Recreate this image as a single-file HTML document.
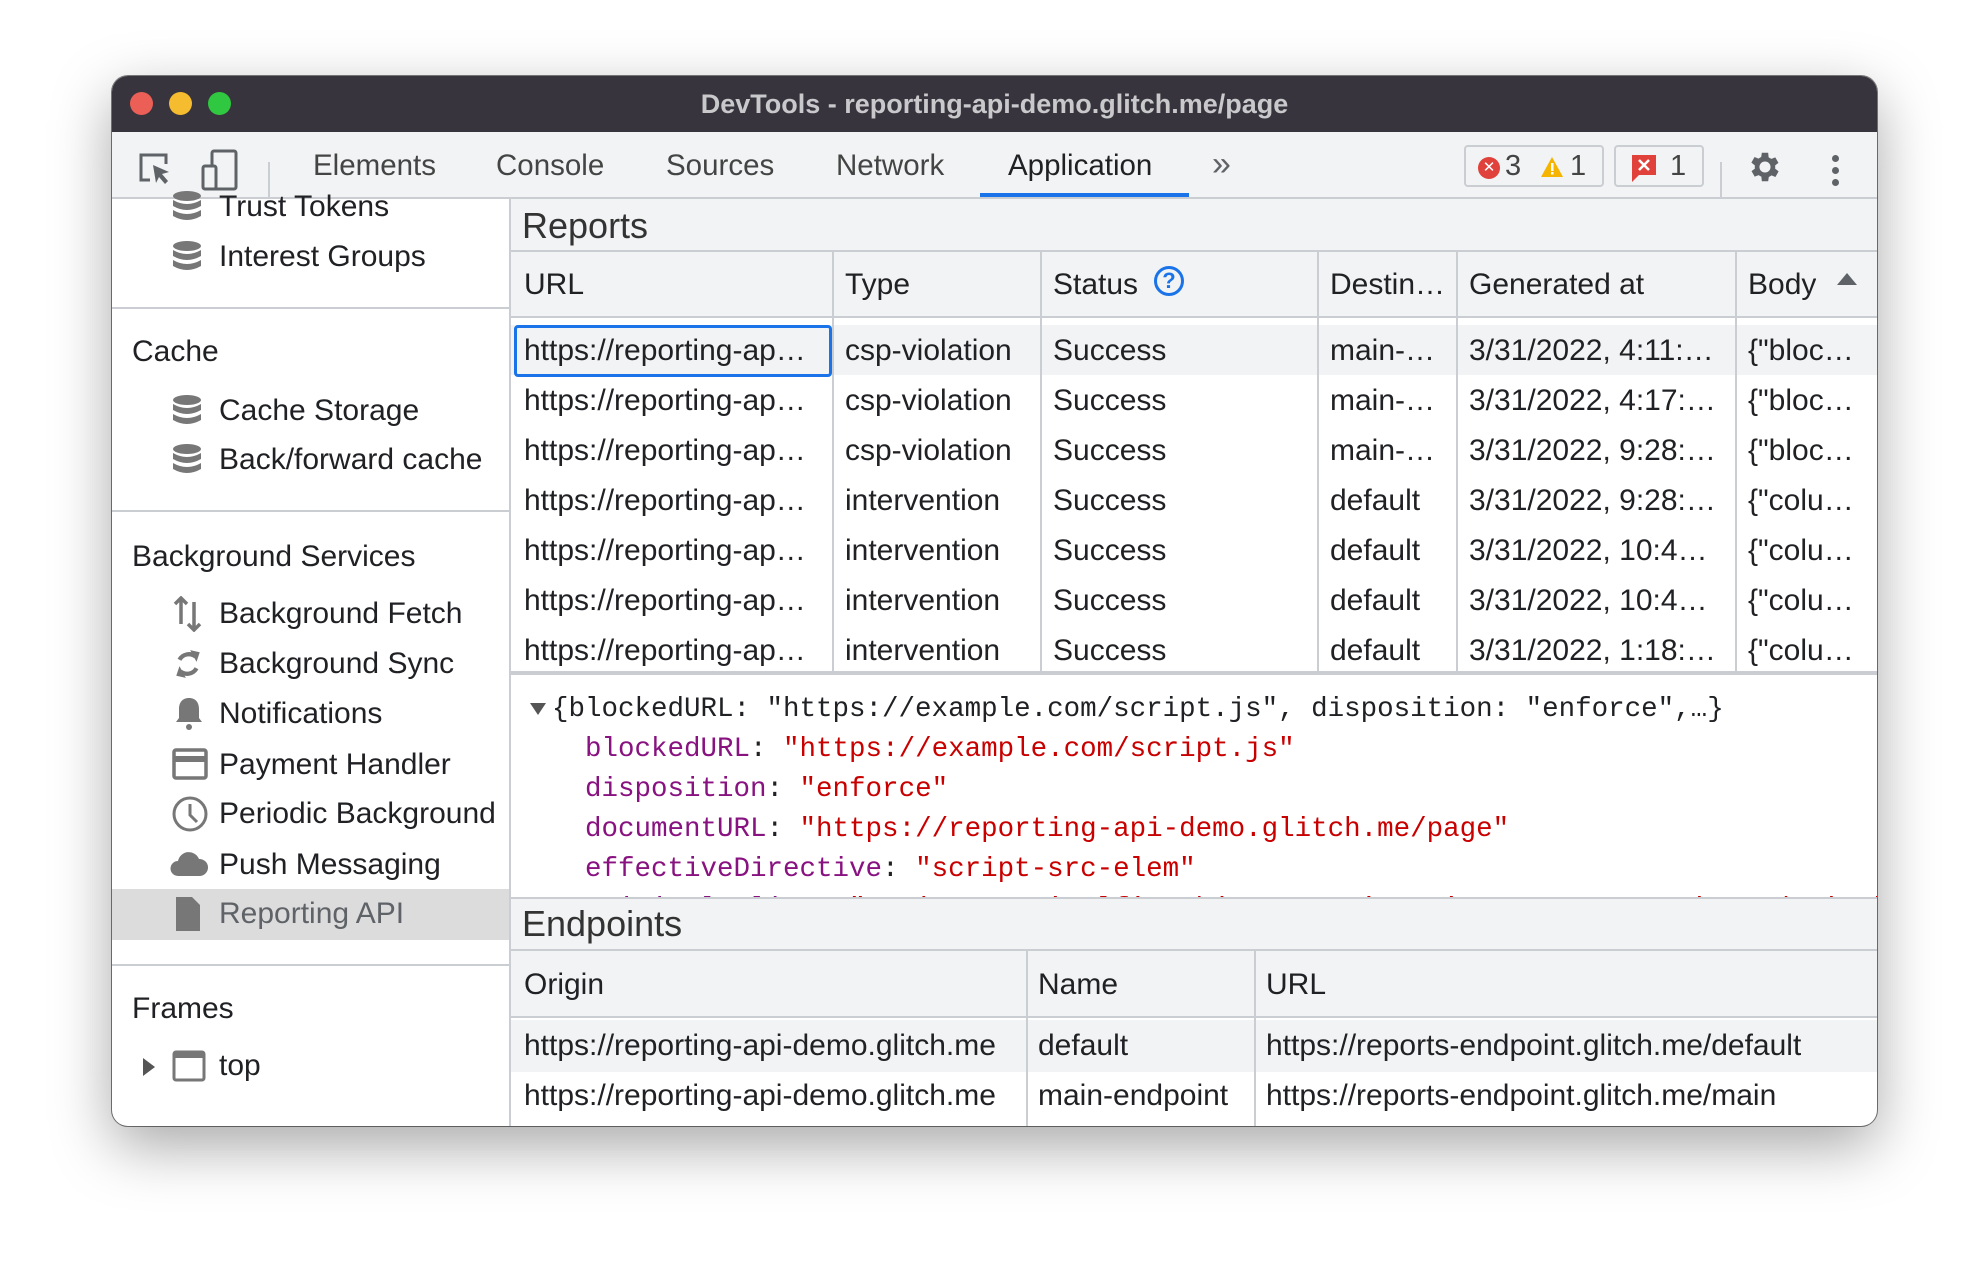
<!DOCTYPE html>
<html><head><meta charset="utf-8"><style>
*{margin:0;padding:0;box-sizing:border-box}
body{width:1988px;height:1274px;background:#fff;position:relative;overflow:hidden;font-family:"Liberation Sans",sans-serif;color:#202124}
.win{position:absolute;left:112px;top:76px;width:1765px;height:1050px;border-radius:16px;overflow:hidden;background:#fff;box-shadow:0 20px 60px rgba(0,0,0,.35),0 0 0 1px rgba(0,0,0,.5)}
.a{position:absolute;white-space:nowrap}
.t{font-size:30px;line-height:50px;height:50px;overflow:hidden}
.mono{font-family:"Liberation Mono",monospace;font-size:27.5px;white-space:pre}
.p{color:#881280}.s{color:#c80000}
.hl{position:absolute;background:#cacdd1}
.tab{position:absolute;top:56px;line-height:67px;font-size:29.5px;color:#444;white-space:nowrap}
</style></head><body>
<div class="win">
 <div class="a" style="left:0;top:0;width:1765px;height:56px;background:#37343d"></div>
 <div class="a" style="left:18px;top:16px;width:23px;height:23px;border-radius:50%;background:#ec5f57"></div>
 <div class="a" style="left:57px;top:16px;width:23px;height:23px;border-radius:50%;background:#f5bc2f"></div>
 <div class="a" style="left:96px;top:16px;width:23px;height:23px;border-radius:50%;background:#2fc840"></div>
 <div class="a" style="left:0;width:1765px;top:0;height:56px;line-height:56px;text-align:center;color:#c9c9cc;font-weight:bold;font-size:27px">DevTools - reporting-api-demo.glitch.me/page</div>
 <div class="a" style="left:0;top:56px;width:1765px;height:67px;background:#f1f3f4;border-bottom:2px solid #cacdd1"></div>
 <svg class="a" style="left:24px;top:74px" width="40" height="40" viewBox="0 0 40 40"><path d="M14 30H5V5h25v9" fill="none" stroke="#5f6368" stroke-width="3"/><path d="M17 15l16 7-7 2 6 7-3 3-6-7-3 6z" fill="#5f6368"/></svg>
 <svg class="a" style="left:88px;top:72px" width="40" height="44" viewBox="0 0 40 44"><rect x="12" y="3" width="24" height="38" rx="2" fill="none" stroke="#5f6368" stroke-width="3"/><rect x="3" y="18" width="13" height="23" rx="2" fill="#f1f3f4" stroke="#5f6368" stroke-width="3"/></svg>
 <div class="a" style="left:156px;top:86px;width:2px;height:36px;background:#cacdd1"></div>
 <div class="tab" style="left:201px">Elements</div>
 <div class="tab" style="left:384px">Console</div>
 <div class="tab" style="left:554px">Sources</div>
 <div class="tab" style="left:724px">Network</div>
 <div class="tab" style="left:896px;color:#202124">Application</div>
 <div class="a" style="left:868px;top:117px;width:209px;height:4px;background:#1a73e8"></div>
 <div class="a" style="left:1100px;top:56px;line-height:64px;font-size:34px;color:#5f6368">»</div>
 <div class="a" style="left:1352px;top:69px;width:140px;height:42px;border:2px solid #cacdd1;border-radius:4px;background:#f1f3f4"></div>
 <div class="a" style="left:1366px;top:81px;width:22px;height:22px;border-radius:50%;background:#e0413a;color:#fff;font-size:15px;line-height:22px;text-align:center">✕</div>
 <div class="a" style="left:1393px;top:69px;line-height:42px;font-size:29px;color:#444">3</div>
 <svg class="a" style="left:1428px;top:80px" width="24" height="22"><path d="M12 1L23 21H1z" fill="#f4b400"/><rect x="11" y="7" width="2.5" height="8" fill="#fff"/><rect x="11" y="16" width="2.5" height="2.5" fill="#fff"/></svg>
 <div class="a" style="left:1458px;top:69px;line-height:42px;font-size:29px;color:#444">1</div>
 <div class="a" style="left:1502px;top:69px;width:90px;height:42px;border:2px solid #cacdd1;border-radius:4px;background:#f1f3f4"></div>
 <svg class="a" style="left:1519px;top:78px" width="26" height="30"><path d="M1 1h24v20H8l-7 7z" fill="#e0413a"/><path d="M8 6l10 10M18 6L8 16" stroke="#fff" stroke-width="2.5"/></svg>
 <div class="a" style="left:1558px;top:69px;line-height:42px;font-size:29px;color:#444">1</div>
 <div class="a" style="left:1608px;top:86px;width:2px;height:36px;background:#cacdd1"></div>
 <svg class="a" style="left:1634px;top:72px" width="38" height="38" viewBox="0 0 24 24"><path fill="#5f6368" d="M19.4 13a7.5 7.5 0 000-2l2.1-1.6-2-3.5-2.5 1a7 7 0 00-1.7-1L15 3h-4l-.4 2.7a7 7 0 00-1.7 1l-2.5-1-2 3.5L6.6 11a7.5 7.5 0 000 2l-2.1 1.6 2 3.5 2.5-1a7 7 0 001.7 1L11 21h4l.4-2.7a7 7 0 001.7-1l2.5 1 2-3.5zM13 15.5a3.5 3.5 0 110-7 3.5 3.5 0 010 7z" transform="translate(-1 0)"/></svg>
 <div class="a" style="left:1720px;top:79px;width:7px;height:7px;border-radius:50%;background:#5f6368"></div>
 <div class="a" style="left:1720px;top:91px;width:7px;height:7px;border-radius:50%;background:#5f6368"></div>
 <div class="a" style="left:1720px;top:103px;width:7px;height:7px;border-radius:50%;background:#5f6368"></div>

 <div class="a" style="left:397px;top:123px;width:2px;height:927px;background:#cacdd1"></div>
 <svg width="0" height="0" style="position:absolute"><defs><g id="db"><ellipse cx="15" cy="6" rx="14" ry="5" fill="#777"/><path d="M1 10q14 8 28 0v6q-14 8-28 0zM1 20q14 8 28 0v6q-14 8-28 0z" fill="#777"/></g></defs></svg>
 <svg class="a" style="left:60px;top:114px" width="30" height="34"><use href="#db"/></svg>
 <div class="a t" style="left:107px;top:106px">Trust Tokens</div>
 <svg class="a" style="left:60px;top:164px" width="30" height="34"><use href="#db"/></svg>
 <div class="a t" style="left:107px;top:156px">Interest Groups</div>
 <div class="hl" style="left:0;top:231px;width:397px;height:2px"></div>
 <div class="a t" style="left:20px;top:251px">Cache</div>
 <svg class="a" style="left:60px;top:318px" width="30" height="34"><use href="#db"/></svg>
 <div class="a t" style="left:107px;top:310px">Cache Storage</div>
 <svg class="a" style="left:60px;top:367px" width="30" height="34"><use href="#db"/></svg>
 <div class="a t" style="left:107px;top:359px">Back/forward cache</div>
 <div class="hl" style="left:0;top:434px;width:397px;height:2px"></div>
 <div class="a t" style="left:20px;top:456px">Background Services</div>
 <svg class="a" style="left:60px;top:520px" width="32" height="36"><path d="M9 2v26M3 8l6-6 6 6M22 6v28M16 28l6 6 6-6" fill="none" stroke="#777" stroke-width="3.5"/></svg>
 <svg class="a" style="left:60px;top:570px" width="32" height="36" viewBox="0 0 30 32"><path d="M22 9a10 10 0 00-15 3M8 23a10 10 0 0015-3" fill="none" stroke="#777" stroke-width="4"/><path d="M17 3l9 2-3 9zM13 29l-9-2 3-9z" fill="#777"/></svg>
 <div class="a t" style="left:107px;top:513px">Background Fetch</div>
 <div class="a t" style="left:107px;top:563px">Background Sync</div>
 <svg class="a" style="left:62px;top:620px" width="30" height="36"><path d="M15 2c-7 0-10 5-10 11v9l-3 4h26l-3-4v-9c0-6-3-11-10-11z" fill="#777"/><circle cx="15" cy="31" r="3" fill="#777"/></svg>
 <div class="a t" style="left:107px;top:613px">Notifications</div>
 <svg class="a" style="left:60px;top:672px" width="36" height="32"><rect x="2" y="2" width="32" height="28" rx="2" fill="none" stroke="#777" stroke-width="3.5"/><rect x="2" y="8" width="32" height="6" fill="#777"/></svg>
 <div class="a t" style="left:107px;top:664px">Payment Handler</div>
 <svg class="a" style="left:60px;top:720px" width="36" height="36"><circle cx="18" cy="18" r="16" fill="none" stroke="#777" stroke-width="3"/><path d="M18 8v11l7 7" fill="none" stroke="#777" stroke-width="3"/></svg>
 <div class="a t" style="left:107px;top:713px">Periodic Background</div>
 <svg class="a" style="left:58px;top:774px" width="38" height="28"><path d="M8 26a7 7 0 010-15 11 11 0 0121-2 8.5 8.5 0 011 17z" fill="#777"/></svg>
 <div class="a t" style="left:107px;top:764px">Push Messaging</div>
 <div class="a" style="left:0;top:813px;width:397px;height:51px;background:#dcdcdc"></div>
 <svg class="a" style="left:62px;top:819px" width="28" height="38"><path d="M2 2h16l8 8v26H2z" fill="#777"/></svg>
 <div class="a t" style="left:107px;top:813px;color:#5f6368">Reporting API</div>
 <div class="hl" style="left:0;top:888px;width:397px;height:2px"></div>
 <div class="a t" style="left:20px;top:908px">Frames</div>
 <svg class="a" style="left:30px;top:981px" width="14" height="20"><path d="M1 1l12 9-12 9z" fill="#555"/></svg>
 <svg class="a" style="left:60px;top:974px" width="34" height="32"><rect x="2" y="2" width="30" height="28" rx="2" fill="none" stroke="#777" stroke-width="3"/><rect x="2" y="2" width="30" height="6" fill="#777"/></svg>
 <div class="a t" style="left:107px;top:965px">top</div>

 <div class="a" style="left:399px;top:123px;width:1366px;height:53px;background:#f1f3f4;border-bottom:2px solid #cacdd1"></div>
 <div class="a" style="left:410px;top:123px;line-height:53px;font-size:36px;color:#333">Reports</div>
 <div class="a" style="left:399px;top:176px;width:1366px;height:66px;background:#f1f3f4;border-bottom:2px solid #cacdd1"></div>
 <div class="a t" style="left:412px;top:184px">URL</div>
 <div class="a t" style="left:733px;top:184px">Type</div>
 <div class="a t" style="left:941px;top:184px">Status</div>
 <div class="a" style="left:1042px;top:190px;width:30px;height:30px;border:3px solid #1a73e8;border-radius:50%;color:#1a73e8;font-size:22px;line-height:24px;text-align:center;font-weight:bold">?</div>
 <div class="a t" style="left:1218px;top:184px">Destin…</div>
 <div class="a t" style="left:1357px;top:184px">Generated at</div>
 <div class="a t" style="left:1636px;top:184px">Body</div>
 <svg class="a" style="left:1724px;top:196px" width="22" height="14"><path d="M1 13L11 1l10 12z" fill="#5f6368"/></svg>
 <div class="a" style="left:399px;top:249px;width:1366px;height:50px;background:#f1f3f4"></div>
 <div class="a" style="left:402px;top:249px;width:318px;height:52px;border:3px solid #1a73e8;border-radius:4px"></div>
 <div class="hl" style="left:720px;top:176px;width:2px;height:421px"></div>
 <div class="hl" style="left:928px;top:176px;width:2px;height:421px"></div>
 <div class="hl" style="left:1205px;top:176px;width:2px;height:421px"></div>
 <div class="hl" style="left:1344px;top:176px;width:2px;height:421px"></div>
 <div class="hl" style="left:1623px;top:176px;width:2px;height:421px"></div>
 <div class="a" style="left:0;top:250px">
  <div class="a t" style="left:412px;top:0">https://reporting-ap…</div><div class="a t" style="left:733px;top:0">csp-violation</div><div class="a t" style="left:941px;top:0">Success</div><div class="a t" style="left:1218px;top:0">main-…</div><div class="a t" style="left:1357px;top:0">3/31/2022, 4:11:…</div><div class="a t" style="left:1636px;top:0">{"bloc…</div>
  <div class="a t" style="left:412px;top:50px">https://reporting-ap…</div><div class="a t" style="left:733px;top:50px">csp-violation</div><div class="a t" style="left:941px;top:50px">Success</div><div class="a t" style="left:1218px;top:50px">main-…</div><div class="a t" style="left:1357px;top:50px">3/31/2022, 4:17:…</div><div class="a t" style="left:1636px;top:50px">{"bloc…</div>
  <div class="a t" style="left:412px;top:100px">https://reporting-ap…</div><div class="a t" style="left:733px;top:100px">csp-violation</div><div class="a t" style="left:941px;top:100px">Success</div><div class="a t" style="left:1218px;top:100px">main-…</div><div class="a t" style="left:1357px;top:100px">3/31/2022, 9:28:…</div><div class="a t" style="left:1636px;top:100px">{"bloc…</div>
  <div class="a t" style="left:412px;top:150px">https://reporting-ap…</div><div class="a t" style="left:733px;top:150px">intervention</div><div class="a t" style="left:941px;top:150px">Success</div><div class="a t" style="left:1218px;top:150px">default</div><div class="a t" style="left:1357px;top:150px">3/31/2022, 9:28:…</div><div class="a t" style="left:1636px;top:150px">{"colu…</div>
  <div class="a t" style="left:412px;top:200px">https://reporting-ap…</div><div class="a t" style="left:733px;top:200px">intervention</div><div class="a t" style="left:941px;top:200px">Success</div><div class="a t" style="left:1218px;top:200px">default</div><div class="a t" style="left:1357px;top:200px">3/31/2022, 10:4…</div><div class="a t" style="left:1636px;top:200px">{"colu…</div>
  <div class="a t" style="left:412px;top:250px">https://reporting-ap…</div><div class="a t" style="left:733px;top:250px">intervention</div><div class="a t" style="left:941px;top:250px">Success</div><div class="a t" style="left:1218px;top:250px">default</div><div class="a t" style="left:1357px;top:250px">3/31/2022, 10:4…</div><div class="a t" style="left:1636px;top:250px">{"colu…</div>
  <div class="a t" style="left:412px;top:300px">https://reporting-ap…</div><div class="a t" style="left:733px;top:300px">intervention</div><div class="a t" style="left:941px;top:300px">Success</div><div class="a t" style="left:1218px;top:300px">default</div><div class="a t" style="left:1357px;top:300px">3/31/2022, 1:18:…</div><div class="a t" style="left:1636px;top:300px">{"colu…</div>
 </div>
 <div class="a" style="left:399px;top:595px;width:1366px;height:4px;background:#cacdd1"></div>
 <div class="a" style="left:399px;top:599px;width:1366px;height:222px;overflow:hidden">
  <svg class="a" style="left:18px;top:27px" width="18" height="14"><path d="M1 1h16L9 13z" fill="#555"/></svg>
  <div class="a mono" style="left:41px;top:19px">{blockedURL: "https://example.com/script.js", disposition: "enforce",…}</div>
  <div class="a mono" style="left:74px;top:59px"><span class="p">blockedURL</span>: <span class="s">"https://example.com/script.js"</span></div>
  <div class="a mono" style="left:74px;top:99px"><span class="p">disposition</span>: <span class="s">"enforce"</span></div>
  <div class="a mono" style="left:74px;top:139px"><span class="p">documentURL</span>: <span class="s">"https://reporting-api-demo.glitch.me/page"</span></div>
  <div class="a mono" style="left:74px;top:179px"><span class="p">effectiveDirective</span>: <span class="s">"script-src-elem"</span></div>
  <div class="a mono" style="left:74px;top:219px"><span class="p">originalPolicy</span>: <span class="s">"script-src 'self'; object-src 'none'; report-to main-endpoint"</span></div>
 </div>
 <div class="a" style="left:399px;top:821px;width:1366px;height:54px;background:#f1f3f4;border-top:2px solid #cacdd1;border-bottom:2px solid #cacdd1"></div>
 <div class="a" style="left:410px;top:821px;line-height:54px;font-size:36px;color:#333">Endpoints</div>
 <div class="a" style="left:399px;top:875px;width:1366px;height:67px;background:#f1f3f4;border-bottom:2px solid #cacdd1"></div>
 <div class="a t" style="left:412px;top:884px">Origin</div>
 <div class="a t" style="left:926px;top:884px">Name</div>
 <div class="a t" style="left:1154px;top:884px">URL</div>
 <div class="a" style="left:399px;top:944px;width:1366px;height:52px;background:#f1f3f4"></div>
 <div class="hl" style="left:914px;top:875px;width:2px;height:175px"></div>
 <div class="hl" style="left:1142px;top:875px;width:2px;height:175px"></div>
 <div class="a t" style="left:412px;top:945px">https://reporting-api-demo.glitch.me</div>
 <div class="a t" style="left:926px;top:945px">default</div>
 <div class="a t" style="left:1154px;top:945px">https://reports-endpoint.glitch.me/default</div>
 <div class="a t" style="left:412px;top:995px">https://reporting-api-demo.glitch.me</div>
 <div class="a t" style="left:926px;top:995px">main-endpoint</div>
 <div class="a t" style="left:1154px;top:995px">https://reports-endpoint.glitch.me/main</div>
</div>
</body></html>
